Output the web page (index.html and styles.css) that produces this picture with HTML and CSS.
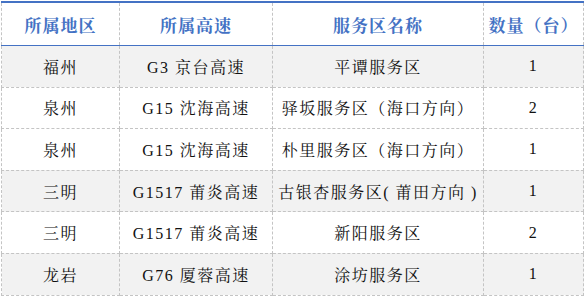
FILE: index.html
```html
<!DOCTYPE html>
<html lang="zh-CN">
<head>
    <meta charset="UTF-8">
    <meta name="viewport" content="width=device-width, initial-scale=1.0">
    <title>服务区列表</title>
    <link rel="stylesheet" href="styles.css">
</head>
<body>
    <table class="area-table">
        <colgroup>
            <col class="col-region">
            <col class="col-road">
            <col class="col-name">
            <col class="col-count">
        </colgroup>
        <thead>
            <tr>
                <th>所属地区</th>
                <th>所属高速</th>
                <th>服务区名称</th>
                <th>数量（台）</th>
            </tr>
        </thead>
        <tbody>
            <tr class="shade">
                <td>福州</td>
                <td>G3 京台高速</td>
                <td>平谭服务区</td>
                <td>1</td>
            </tr>
            <tr>
                <td>泉州</td>
                <td>G15 沈海高速</td>
                <td>驿坂服务区（海口方向）</td>
                <td>2</td>
            </tr>
            <tr>
                <td>泉州</td>
                <td>G15 沈海高速</td>
                <td>朴里服务区（海口方向）</td>
                <td>1</td>
            </tr>
            <tr class="shade">
                <td>三明</td>
                <td>G1517 莆炎高速</td>
                <td>古银杏服务区( 莆田方向 )</td>
                <td>1</td>
            </tr>
            <tr>
                <td>三明</td>
                <td>G1517 莆炎高速</td>
                <td>新阳服务区</td>
                <td>2</td>
            </tr>
            <tr class="shade">
                <td>龙岩</td>
                <td>G76 厦蓉高速</td>
                <td>涂坊服务区</td>
                <td>1</td>
            </tr>
        </tbody>
    </table>
</body>
</html>
```

FILE: styles.css
```css
body {
    margin: 0;
    background-color: #ffffff;
    font-family: "Liberation Serif", "Noto Serif CJK SC", "Noto Sans CJK SC", serif;
    color: #111;
}

.area-table {
    margin: 1px 0 0 1px;
    width: 582px;
    border-collapse: collapse;
    table-layout: fixed;
    border-top: 2px solid #4472c4;
}

.col-region { width: 118px; }
.col-road { width: 153px; }
.col-name { width: 211px; }
.col-count { width: 100px; }

.area-table th,
.area-table td {
    border-left: 1px dashed #c4c4c4;
    border-right: 1px dashed #c4c4c4;
    text-align: center;
    padding: 0;
    white-space: nowrap;
}

.area-table th {
    height: 42px;
    font-size: 17px;
    font-weight: bold;
    letter-spacing: 1px;
    color: #4472c4;
    border-bottom: 1px solid #4472c4;
}

.area-table td {
    height: 40.6px;
    font-size: 16px;
    letter-spacing: 1.5px;
    border-bottom: 1px dashed #c4c4c4;
}

.shade td {
    background-color: #f2f2f2;
}
```
